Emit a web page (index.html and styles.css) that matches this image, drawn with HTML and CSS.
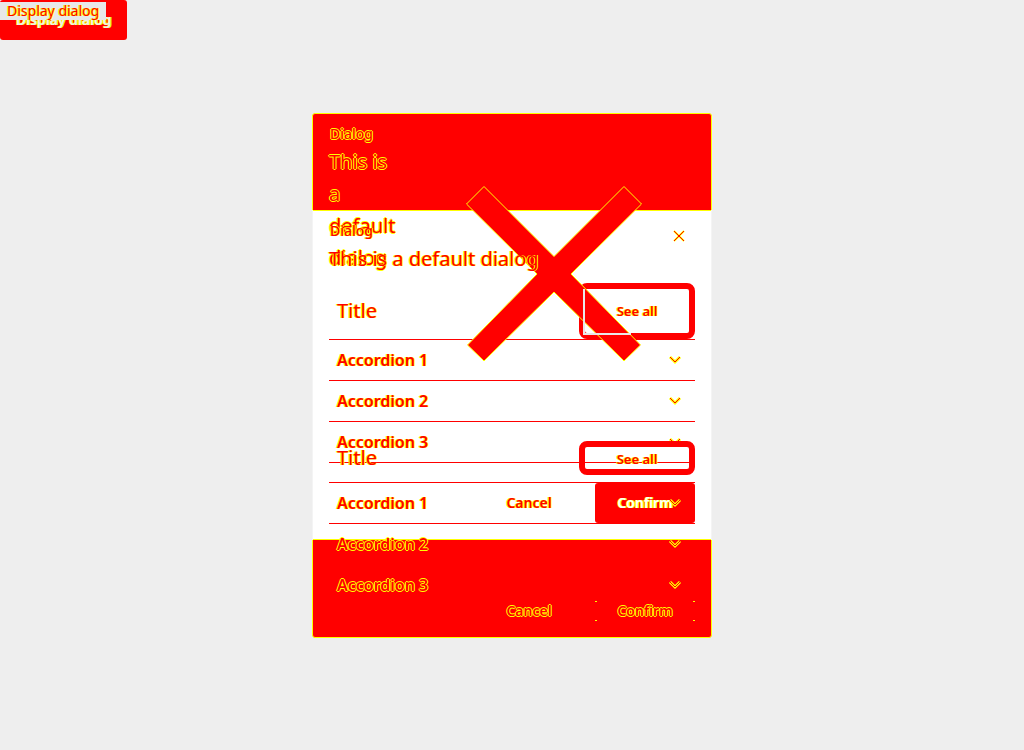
FILE: index.html
```html
<!DOCTYPE html>
<html lang="en">
<head>
<meta charset="utf-8">
<title>Dialog</title>
<link rel="stylesheet" href="styles.css">
</head>
<body>
<svg class="defs" aria-hidden="true">
  <symbol id="chevron" viewBox="0 0 14 10"><path class="edge" d="M2 2l5 5 5-5"/><path class="core" d="M2 2l5 5 5-5"/></symbol>
</svg>
<div class="trigger">
  <button class="trigger-button" type="button">Display dialog</button>
  <button class="trigger-label" type="button">Display dialog</button>
</div>
<main class="stage">
  <section class="layer tall" aria-label="Expanded dialog">
    <header class="head">
      <div class="heading"><p class="kicker">Dialog</p><h2 class="headline">This is a default dialog</h2></div>
      <svg class="cross" viewBox="0 0 176 176" aria-label="Close">
        <path class="cross-shape" d="M18 .5L88 70.500 158 .5 175.500 18 105 88 174.500 159 158 175 88 106 18 175 1.500 159 71 88 .5 18Z"/>
        <path class="cross-line" d="M118 103v45h47"/>
      </svg>
    </header>
    <div class="body">
      <div class="row"><h3 class="title">Title</h3><button class="see" type="button">See all</button></div>
      <button class="item" type="button">Accordion 1<svg class="chevron"><use href="#chevron"/></svg></button>
      <button class="item" type="button">Accordion 2<svg class="chevron"><use href="#chevron"/></svg></button>
      <button class="item" type="button">Accordion 3<svg class="chevron"><use href="#chevron"/></svg></button>
    </div>
    <footer class="foot"><button class="action" type="button">Cancel</button><button class="action confirm" type="button">Confirm</button></footer>
  </section>
  <section class="layer front" aria-label="Dialog">
    <header class="head">
      <div class="heading"><p class="kicker">Dialog</p><h2 class="headline">This is a default dialog</h2></div>
      <button class="close" type="button" aria-label="Close"><svg viewBox="0 0 12 12"><path class="edge" d="M1 1l10 10M11 1L1 11"/><path class="core" d="M1 1l10 10M11 1L1 11"/></svg></button>
    </header>
    <div class="body">
      <div class="row"><h3 class="title">Title</h3><button class="see" type="button">See all</button></div>
      <button class="item" type="button">Accordion 1<svg class="chevron"><use href="#chevron"/></svg></button>
      <button class="item" type="button">Accordion 2<svg class="chevron"><use href="#chevron"/></svg></button>
      <button class="item" type="button">Accordion 3<svg class="chevron"><use href="#chevron"/></svg></button>
    </div>
    <footer class="foot"><button class="action" type="button">Cancel</button><button class="action confirm" type="button">Confirm</button></footer>
  </section>
</main>
</body>
</html>
```
FILE: styles.css
```css
* { box-sizing: border-box; }
body {
  margin: 0;
  min-height: 100vh;
  background: #eee;
  color: #f00;
  font: 14px/24px "Noto Sans", sans-serif;
  text-shadow: 1px 0 #ff0, -1px 0 #ff0;
  display: grid;
}
button { font: inherit; color: inherit; text-shadow: inherit; border: 0; padding: 0; background: none; }
h2, h3, p { margin: 0; font-weight: 400; }
.defs { position: absolute; width: 0; height: 0; }
.edge { fill: none; stroke: #ff0; stroke-width: 3; }
.core { fill: none; stroke: #f00; stroke-width: 1; }
.front .edge { stroke-width: 2; }
.front .core { stroke-width: 1; }

.trigger { position: absolute; top: 0; left: 0; }
.trigger-button {
  height: 40px;
  padding: 0 15px 0 16px;
  border-radius: 3px;
  background: #f00;
  color: #eee;
  font-weight: 600;
  display: block;
}
.trigger-label { position: absolute; top: 2px; left: 0; padding: 0 7px; line-height: 18px; background: #e8e8e8; white-space: nowrap; }

.stage { display: grid; grid-template-columns: minmax(0, 400px); place-content: center; align-items: center; }
.layer { grid-area: 1 / 1; position: relative; padding: 9px 17px 17px; }
.tall { padding-top: 10px; }
.layer::before { content: ""; position: absolute; inset: 0; border-radius: 3px; }
.tall::before { z-index: 0; inset: 1px 0 0; background: #f00; border: 1px solid #ff0; }
.front::before {
  z-index: 1;
  background: #fff;
  border: solid #f4f4f4;
  border-width: 0 1px;
  border-radius: 0;
  box-shadow: inset 0 1px #ff0, inset 0 -1px #ff0;
}
.heading, .body, .foot { position: relative; z-index: 3; }
.front .body { z-index: 1; }
.front .foot { z-index: 2; }

.head { display: flex; justify-content: space-between; }
.front .head { padding-bottom: 8px; }
.tall .head { min-height: 303px; align-items: center; }
.tall .heading { align-self: flex-start; width: 72px; }
.kicker { padding-left: 1px; font-weight: 500; }
.headline { font-size: 20px; line-height: 32px; }
.tall .kicker, .tall .headline { text-shadow: 1px 0 #ff0, -1px 0 #ff0, 0 1px #ff0, 0 -1px #ff0; }
.cross { position: relative; z-index: 2; width: 176px; height: 176px; margin-right: 53px; }
.cross-shape { fill: #f00; stroke: #ff0; stroke-width: 1; }
.cross-line { fill: none; stroke: #e8e8e8; stroke-width: 2; }
.close { position: relative; z-index: 3; align-self: flex-start; padding: 11px 10px; line-height: 0; }
.close svg { width: 12px; height: 12px; }

.tall .body { margin-top: 16px; }
.row { display: flex; justify-content: space-between; align-items: center; padding-left: 8px; border-bottom: 1px solid #f00; }
.tall .row { padding-bottom: 7px; }
.title { font-size: 20px; line-height: 32px; }
.see {
  width: 116px;
  height: 56px;
  border: 6px solid #f00;
  border-radius: 8px;
  font-size: 13px;
  font-weight: 600;
}
.tall .see { height: 34px; }
.item {
  display: flex;
  width: 100%;
  height: 41px;
  align-items: center;
  justify-content: space-between;
  padding: 0 13px 0 8px;
  border-bottom: 1px solid #f00;
  font-size: 16px;
  font-weight: 600;
}
.chevron { width: 14px; height: 10px; }
.foot { display: flex; justify-content: flex-end; gap: 16px; margin-top: 20px; }
.tall .foot { margin-top: -5px; }
.action { width: 100px; height: 40px; border-radius: 3px; font-weight: 600; }
.tall .action { height: 20px; line-height: 20px; text-shadow: 1px 0 #ff0, -1px 0 #ff0, 0 1px #ff0, 0 -1px #ff0; }
.tall .confirm {
  border-radius: 0;
  background:
    linear-gradient(#ff0, #ff0) 0 0 / 2px 1px,
    linear-gradient(#ff0, #ff0) 100% 0 / 2px 1px,
    linear-gradient(#ff0, #ff0) 0 100% / 2px 1px,
    linear-gradient(#ff0, #ff0) 100% 100% / 2px 1px;
  background-repeat: no-repeat;
}
.tall .item:nth-child(n + 3) { text-shadow: 1px 0 #ff0, -1px 0 #ff0, 0 1px #ff0, 0 -1px #ff0; }
.front .confirm { background: #f00; color: #fff; }
```
